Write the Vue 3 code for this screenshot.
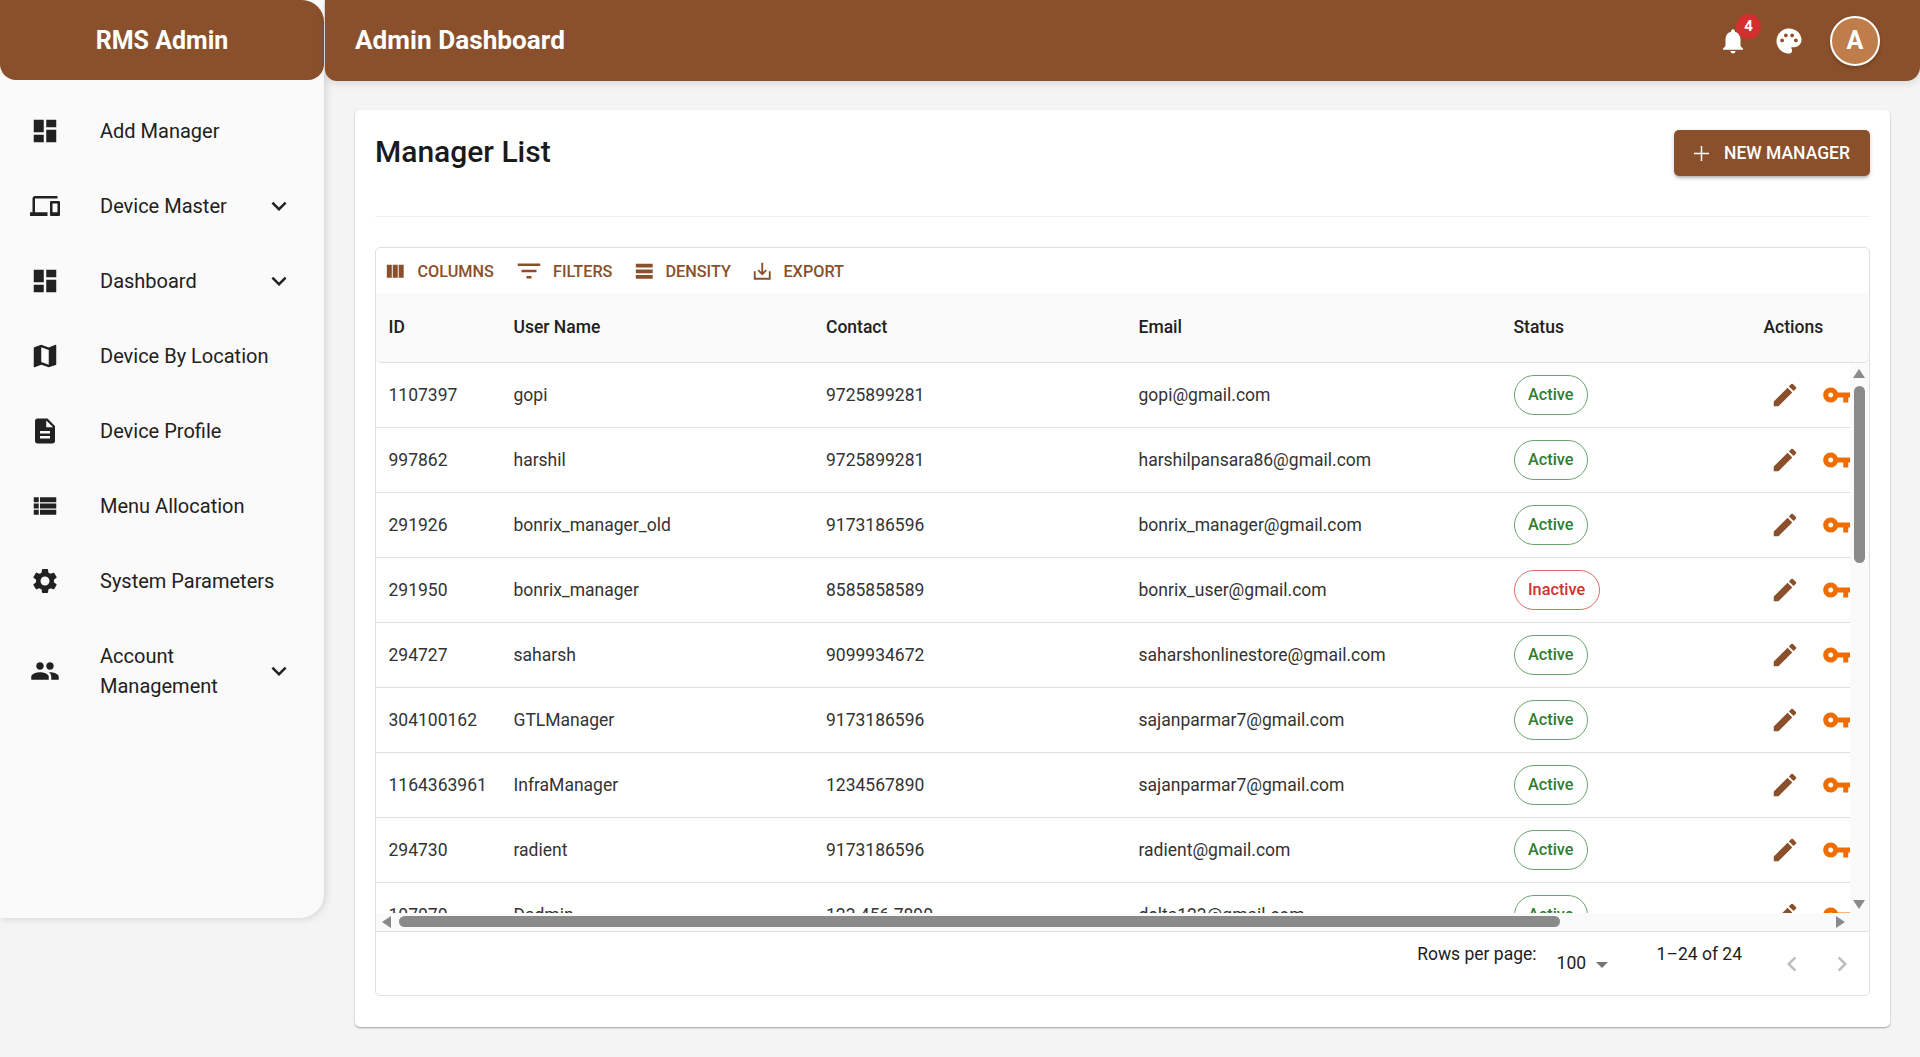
<script setup>
const icons = {
  dashboard: 'M3 13h8V3H3v10zm0 8h8v-6H3v6zm10 0h8V11h-8v10zm0-18v6h8V3h-8z',
  devices: 'M4 6h18V4H4c-1.1 0-2 .9-2 2v11H0v3h14v-3H4V6zm19 2h-6c-.55 0-1 .45-1 1v10c0 .55.45 1 1 1h6c.55 0 1-.45 1-1V9c0-.55-.45-1-1-1zm-1 9h-4v-7h4v7z',
  map: 'm20.5 3-.16.03L15 5.1 9 3 3.36 4.9c-.21.07-.36.25-.36.48V20.5c0 .28.22.5.5.5l.16-.03L9 18.9l6 2.1 5.64-1.9c.21-.07.36-.25.36-.48V3.5c0-.28-.22-.5-.5-.5zM15 19l-6-2.11V5l6 2.11V19z',
  description: 'M14 2H6c-1.1 0-1.99.9-1.99 2L4 20c0 1.1.89 2 1.99 2H18c1.1 0 2-.9 2-2V8l-6-6zm2 16H8v-2h8v2zm0-4H8v-2h8v2zm-3-5V3.5L18.5 9H13z',
  list: 'M3 14h4v-4H3v4zm0 5h4v-4H3v4zM3 9h4V5H3v4zm5 5h13v-4H8v4zm0 5h13v-4H8v4zM8 5v4h13V5H8z',
  settings: 'M19.14 12.94c.04-.3.06-.61.06-.94 0-.32-.02-.64-.07-.94l2.03-1.58c.18-.14.23-.41.12-.61l-1.92-3.32c-.12-.22-.37-.29-.59-.22l-2.39.96c-.5-.38-1.03-.7-1.62-.94l-.36-2.54c-.04-.24-.24-.41-.48-.41h-3.84c-.24 0-.43.17-.47.41l-.36 2.54c-.59.24-1.13.57-1.62.94l-2.39-.96c-.22-.08-.47 0-.59.22L2.74 8.87c-.12.21-.08.47.12.61l2.03 1.58c-.05.3-.09.63-.09.94s.02.64.07.94l-2.03 1.58c-.18.14-.23.41-.12.61l1.92 3.32c.12.22.37.29.59.22l2.39-.96c.5.38 1.03.7 1.62.94l.36 2.54c.05.24.24.41.48.41h3.84c.24 0 .44-.17.47-.41l.36-2.54c.59-.24 1.13-.56 1.62-.94l2.39.96c.22.08.47 0 .59-.22l1.92-3.32c.12-.22.07-.47-.12-.61l-2.01-1.58zM12 15.6c-1.98 0-3.6-1.62-3.6-3.6s1.62-3.6 3.6-3.6 3.6 1.62 3.6 3.6-1.62 3.6-3.6 3.6z',
  people: 'M16 11c1.66 0 2.99-1.34 2.99-3S17.66 5 16 5c-1.66 0-3 1.34-3 3s1.34 3 3 3zm-8 0c1.66 0 2.99-1.34 2.99-3S9.66 5 8 5C6.34 5 5 6.34 5 8s1.34 3 3 3zm0 2c-2.33 0-7 1.17-7 3.5V19h14v-2.5c0-2.33-4.67-3.5-7-3.5zm8 0c-.29 0-.62.02-.97.05 1.16.84 1.97 1.97 1.97 3.45V19h6v-2.5c0-2.33-4.67-3.5-7-3.5z',
  expand: 'M16.59 8.59 12 13.17 7.41 8.59 6 10l6 6 6-6z',
  bell: 'M12 22c1.1 0 2-.9 2-2h-4c0 1.1.89 2 2 2zm6-6v-5c0-3.07-1.64-5.64-4.5-6.32V4c0-.83-.67-1.5-1.5-1.5s-1.5.67-1.5 1.5v.68C7.63 5.36 6 7.92 6 11v5l-2 2v1h16v-1l-2-2z',
  palette: 'M12 2C6.49 2 2 6.49 2 12s4.49 10 10 10c1.38 0 2.5-1.12 2.5-2.5 0-.61-.23-1.2-.64-1.67-.08-.1-.13-.21-.13-.33 0-.28.22-.5.5-.5H16c3.31 0 6-2.69 6-6 0-4.96-4.49-9-10-9zm-5.5 11c-.83 0-1.5-.67-1.5-1.5S5.67 10 6.5 10s1.5.67 1.5 1.5S7.33 13 6.5 13zm3-4C8.67 9 8 8.33 8 7.5S8.67 6 9.5 6s1.5.67 1.5 1.5S10.33 9 9.5 9zm5 0c-.83 0-1.5-.67-1.5-1.5S13.67 6 14.5 6s1.5.67 1.5 1.5S15.33 9 14.5 9zm3 4c-.83 0-1.5-.67-1.5-1.5s.67-1.5 1.5-1.5 1.5.67 1.5 1.5-.67 1.5-1.5 1.5z',
  edit: 'M3 17.25V21h3.75L17.81 9.94l-3.75-3.75L3 17.25zM20.71 7.04c.39-.39.39-1.02 0-1.41l-2.34-2.34a.996.996 0 0 0-1.41 0l-1.83 1.83 3.75 3.75 1.83-1.83z',
  key: 'M12.65 10C11.83 7.67 9.61 6 7 6c-3.31 0-6 2.69-6 6s2.69 6 6 6c2.61 0 4.83-1.67 5.65-4H17v4h4v-4h2v-4H12.65zM7 14c-1.1 0-2-.9-2-2s.9-2 2-2 2 .9 2 2-.9 2-2 2z',
  columns: 'M14.67 5v14H9.33V5h5.34zm1 14H21V5h-5.33v14zm-7.34 0V5H3v14h5.33z',
  filter: 'M10 18h4v-2h-4v2zM3 6v2h18V6H3zm3 7h12v-2H6v2z',
  density: 'M21 8H3V4h18v4zm0 2H3v4h18v-4zm0 6H3v4h18v-4z',
  exportFile: 'M19 12v7H5v-7H3v9h18v-9h-2zm-6 .67 2.59-2.58L17 11.5l-5 5-5-5 1.41-1.41L11 12.67V3h2v9.67z',
  prev: 'M15.41 7.41 14 6l-6 6 6 6 1.41-1.41L10.83 12z',
  next: 'M10 6 8.59 7.41 13.17 12l-4.58 4.59L10 18l6-6z',
}

const menu = [
  { label: 'Add Manager', icon: 'dashboard' },
  { label: 'Device Master', icon: 'devices', more: true },
  { label: 'Dashboard', icon: 'dashboard', more: true },
  { label: 'Device By Location', icon: 'map' },
  { label: 'Device Profile', icon: 'description' },
  { label: 'Menu Allocation', icon: 'list' },
  { label: 'System Parameters', icon: 'settings' },
  { label: 'Account Management', icon: 'people', more: true },
]

const tools = [
  { label: 'Columns', icon: 'columns', cls: 'tool-columns' },
  { label: 'Filters', icon: 'filter', cls: 'tool-filters' },
  { label: 'Density', icon: 'density', cls: 'tool-density' },
  { label: 'Export', icon: 'exportFile', cls: 'tool-export' },
]

const rows = [
  { id: '1107397', name: 'gopi', contact: '9725899281', email: 'gopi@gmail.com', active: true },
  { id: '997862', name: 'harshil', contact: '9725899281', email: 'harshilpansara86@gmail.com', active: true },
  { id: '291926', name: 'bonrix_manager_old', contact: '9173186596', email: 'bonrix_manager@gmail.com', active: true },
  { id: '291950', name: 'bonrix_manager', contact: '8585858589', email: 'bonrix_user@gmail.com', active: false },
  { id: '294727', name: 'saharsh', contact: '9099934672', email: 'saharshonlinestore@gmail.com', active: true },
  { id: '304100162', name: 'GTLManager', contact: '9173186596', email: 'sajanparmar7@gmail.com', active: true },
  { id: '1164363961', name: 'InfraManager', contact: '1234567890', email: 'sajanparmar7@gmail.com', active: true },
  { id: '294730', name: 'radient', contact: '9173186596', email: 'radient@gmail.com', active: true },
  { id: '107070', name: 'Dadmin', contact: '123 456 7890', email: 'delta123@gmail.com', active: true },
]
</script>

<template>
  <div class="page">
    <aside class="sidebar">
      <div class="logo">RMS Admin</div>
      <nav class="menu">
        <div v-for="item in menu" :key="item.label" class="menu-item">
          <svg class="menu-icon" viewBox="0 0 24 24"><path :d="icons[item.icon]" /></svg>
          <span class="menu-label">{{ item.label }}</span>
          <svg v-if="item.more" class="menu-more" viewBox="0 0 24 24"><path :d="icons.expand" /></svg>
        </div>
      </nav>
    </aside>

    <div class="main">
      <header class="appbar">
        <h1 class="appbar-title">Admin Dashboard</h1>
        <div class="appbar-actions">
          <div class="bell">
            <svg class="bar-icon" viewBox="0 0 24 24"><path :d="icons.bell" /></svg>
            <span class="badge">4</span>
          </div>
          <svg class="bar-icon" viewBox="0 0 24 24"><path :d="icons.palette" /></svg>
          <div class="avatar">A</div>
        </div>
      </header>

      <section class="content">
        <div class="card">
          <div class="card-head">
            <h2 class="card-title">Manager List</h2>
            <button class="new-btn">
              <svg class="plus" viewBox="0 0 15 15"><path d="M7.5 0v15M0 7.5h15" /></svg>
              New Manager
            </button>
          </div>

          <div class="grid">
            <div class="toolbar">
              <div v-for="t in tools" :key="t.label" class="tool" :class="t.cls">
                <svg class="tool-icon" viewBox="0 0 24 24"><path :d="icons[t.icon]" /></svg>
                <span>{{ t.label }}</span>
              </div>
            </div>

            <div class="grid-head">
              <div class="cell c-id">ID</div>
              <div class="cell c-name">User Name</div>
              <div class="cell c-contact">Contact</div>
              <div class="cell c-email">Email</div>
              <div class="cell c-status">Status</div>
              <div class="cell c-actions">Actions</div>
            </div>

            <div class="grid-body">
              <div class="viewport">
                <div v-for="r in rows" :key="r.id" class="row">
                  <div class="cell c-id">{{ r.id }}</div>
                  <div class="cell c-name">{{ r.name }}</div>
                  <div class="cell c-contact">{{ r.contact }}</div>
                  <div class="cell c-email">{{ r.email }}</div>
                  <div class="cell c-status">
                    <span class="chip" :class="r.active ? 'chip-on' : 'chip-off'">{{ r.active ? 'Active' : 'Inactive' }}</span>
                  </div>
                  <div class="cell c-actions">
                    <span class="act"><svg class="act-icon edit" viewBox="0 0 24 24"><path :d="icons.edit" /></svg></span>
                    <span class="act"><svg class="act-icon key" viewBox="0 0 24 24"><path :d="icons.key" /></svg></span>
                  </div>
                </div>
              </div>
              <div class="vbar">
                <span class="arrow arrow-up"></span>
                <span class="vthumb"></span>
                <span class="arrow arrow-down"></span>
              </div>
            </div>

            <div class="hbar">
              <span class="arrow arrow-left"></span>
              <span class="hthumb"></span>
              <span class="arrow arrow-right"></span>
            </div>

            <div class="grid-foot">
              <span class="foot-label">Rows per page:</span>
              <span class="foot-select">100<span class="select-caret"></span></span>
              <span class="foot-range">1–24 of 24</span>
              <div class="foot-pager">
                <svg class="pager-icon" viewBox="0 0 24 24"><path :d="icons.prev" /></svg>
                <svg class="pager-icon" viewBox="0 0 24 24"><path :d="icons.next" /></svg>
              </div>
            </div>
          </div>
        </div>
      </section>
    </div>
  </div>
</template>

<style>
html, body {
  margin: 0;
  background: #f4f4f4;
}
</style>

<style scoped>
.page {
  display: flex;
  align-items: flex-start;
  width: 1920px;
  height: 1057px;
  overflow: hidden;
  background: #f4f4f4;
  font-family: Roboto, "Liberation Sans", sans-serif;
  color: #212121;
}

/* sidebar */
.sidebar {
  width: 324px;
  height: 918px;
  flex: none;
  background: #fafafa;
  border-bottom-right-radius: 24px;
  box-shadow: 1px 0 8px rgba(0, 0, 0, 0.16);
}
.logo {
  height: 80px;
  display: flex;
  align-items: center;
  justify-content: center;
  background: #8a502b;
  color: #fff;
  font-size: 25px;
  font-weight: 700;
  border-radius: 0 22px 16px 16px;
}
.menu {
  padding-top: 13px;
}
.menu-item {
  display: flex;
  align-items: center;
  padding: 22.5px 30px;
}
.menu-icon {
  width: 30px;
  height: 30px;
  flex: none;
  margin-right: 40px;
  fill: #212121;
}
.menu-label {
  flex: 1;
  font-size: 20px;
  line-height: 30px;
}
.menu-more {
  width: 30px;
  height: 30px;
  flex: none;
  fill: #212121;
}

/* top bar */
.main {
  flex: 1;
  min-width: 0;
  margin-left: 1px;
}
.appbar {
  height: 81px;
  display: flex;
  align-items: center;
  justify-content: space-between;
  padding: 0 40px 0 30px;
  background: #8a502b;
  color: #fff;
  border-radius: 0 0 14px 12px;
  box-shadow: 0 2px 8px rgba(0, 0, 0, 0.12);
}
.appbar-title {
  margin: 0 0 2px;
  font-size: 26.2px;
  font-weight: 700;
}
.appbar-actions {
  display: flex;
  align-items: center;
  gap: 26px;
}
.bar-icon {
  display: block;
  width: 30px;
  height: 30px;
  fill: #fff;
}
.bell {
  position: relative;
}
.badge {
  position: absolute;
  top: -12px;
  left: 18px;
  width: 25px;
  height: 25px;
  border-radius: 50%;
  background: #d32f2f;
  color: #fff;
  font-size: 15px;
  font-weight: 700;
  line-height: 25px;
  text-align: center;
}
.avatar {
  width: 46px;
  height: 46px;
  border: 2px solid #fff;
  border-radius: 50%;
  background: #c07d4c;
  color: #fff;
  font-size: 25px;
  font-weight: 700;
  line-height: 46px;
  text-align: center;
  box-shadow: 0 2px 4px rgba(0, 0, 0, 0.2);
}

/* card */
.content {
  padding: 29px 30px 0;
}
.card {
  height: 917px;
  box-sizing: border-box;
  padding: 20px;
  background: #fff;
  border-radius: 5px;
  box-shadow: 0 1px 2px rgba(0, 0, 0, 0.35);
}
.card-head {
  display: flex;
  align-items: center;
  justify-content: space-between;
  padding-bottom: 40px;
  border-bottom: 1px solid #f0f0f0;
}
.card-title {
  margin: 0 0 2.5px;
  font-size: 30px;
  font-weight: 500;
  color: #1a1a1a;
}
.new-btn {
  display: flex;
  align-items: center;
  width: 196px;
  height: 46px;
  box-sizing: border-box;
  padding: 0 0 0 20px;
  border: 0;
  border-radius: 5px;
  background: #8a502b;
  color: #fff;
  font-family: inherit;
  font-size: 17.5px;
  font-weight: 500;
  text-transform: uppercase;
  box-shadow: 0 3px 3px -2px rgba(0, 0, 0, 0.2), 0 2px 4px rgba(0, 0, 0, 0.2);
}
.plus {
  width: 15px;
  height: 15px;
  margin-right: 15px;
  fill: none;
  stroke: #fff;
  stroke-width: 1.5;
}

/* data grid */
.grid {
  margin-top: 30px;
  height: 749px;
  box-sizing: border-box;
  border: 1.5px solid #e0e0e0;
  border-radius: 5px;
  overflow: hidden;
}
.toolbar {
  display: flex;
  height: 44.5px;
  box-sizing: border-box;
  padding-top: 2px;
  align-items: center;
  color: #8a502b;
  font-size: 16.25px;
  font-weight: 500;
  text-transform: uppercase;
}
.tool {
  display: flex;
  align-items: center;
}
.tool-icon {
  width: 22.5px;
  height: 22.5px;
  fill: #8a502b;
  margin-right: 10px;
}
.tool-columns { margin-left: 8px; }
.tool-columns .tool-icon { margin-right: 11px; }
.tool-filters { margin-left: 20px; }
.tool-filters .tool-icon { width: 30px; height: 30px; margin-right: 9px; }
.tool-density { margin-left: 20.5px; }
.tool-density .tool-icon { margin-right: 10px; }
.tool-export { margin-left: 20px; }

.grid-head {
  display: flex;
  height: 70.5px;
  box-sizing: border-box;
  align-items: center;
  background: #fafafa;
  border-bottom: 1.5px solid #e0e0e0;
  border-radius: 0 0 5px 5px;
  font-size: 17.5px;
  font-weight: 500;
}
.cell {
  flex: none;
  box-sizing: border-box;
  padding: 0 12.5px;
  white-space: nowrap;
}
.c-id { width: 125px; }
.c-name { width: 312.5px; }
.c-contact { width: 312.5px; }
.c-email { width: 375px; }
.c-status { width: 250px; }
.c-actions { width: 250px; display: flex; align-items: center; gap: 10px; }

.grid-body {
  display: flex;
  height: 550px;
}
.viewport {
  flex: 1;
  min-width: 0;
  overflow: hidden;
}
.row {
  display: flex;
  align-items: center;
  height: 65px;
  box-sizing: border-box;
  border-bottom: 1.5px solid #e0e0e0;
  font-size: 17.5px;
  color: #333;
}
.chip {
  display: inline-block;
  height: 40px;
  box-sizing: border-box;
  padding: 0 13.5px;
  border-radius: 20px;
  border: 1.25px solid;
  font-size: 16.25px;
  font-weight: 500;
  line-height: 37.5px;
}
.chip-on {
  color: #2e7d32;
  border-color: rgba(46, 125, 50, 0.7);
}
.chip-off {
  color: #d32f2f;
  border-color: rgba(211, 47, 47, 0.7);
}
.act {
  flex: none;
  padding: 6.25px;
  display: flex;
}
.act-icon {
  width: 30px;
  height: 30px;
}
.act-icon.edit { fill: #8a502b; }
.act-icon.key { fill: #ef6c00; }

/* scrollbars */
.vbar {
  position: relative;
  width: 19px;
  flex: none;
  background: #fafafa;
}
.vthumb {
  position: absolute;
  top: 23px;
  left: 4px;
  width: 11px;
  height: 177px;
  border-radius: 6px;
  background: #8a8a8a;
}
.hbar {
  display: flex;
  align-items: center;
  height: 17.5px;
  padding: 0 24px 0 6px;
  background: #fafafa;
  border-bottom: 1.5px solid #e0e0e0;
}
.hthumb {
  width: 1161px;
  height: 11px;
  margin-left: 8px;
  border-radius: 6px;
  background: #8a8a8a;
}
.arrow {
  display: block;
  width: 0;
  height: 0;
  border-style: solid;
  border-color: transparent;
}
.vbar .arrow {
  position: absolute;
  left: 3px;
}
.arrow-up {
  top: 6px;
  border-width: 0 6.5px 9px;
  border-bottom-color: #8a8a8a !important;
}
.arrow-down {
  bottom: 4px;
  border-width: 9px 6.5px 0;
  border-top-color: #8a8a8a !important;
}
.arrow-left {
  border-width: 6.5px 9px 6.5px 0;
  border-right-color: #8a8a8a;
}
.arrow-right {
  margin-left: auto;
  border-width: 6.5px 0 6.5px 9px;
  border-left-color: #8a8a8a;
}

.grid-foot {
  display: flex;
  align-items: flex-start;
  justify-content: flex-end;
  height: 64px;
  padding-right: 12px;
  font-size: 17.5px;
  color: #212121;
}
.foot-label {
  margin-top: 12.5px;
}
.foot-select {
  display: flex;
  align-items: center;
  margin: 21px 0 0 20px;
}
.select-caret {
  width: 0;
  height: 0;
  margin: 4px 0 0 9.5px;
  border-style: solid;
  border-width: 6px 6.5px 0;
  border-color: #757575 transparent transparent;
}
.foot-range {
  margin: 12.5px 0 0 49px;
}
.foot-pager {
  display: flex;
  gap: 20px;
  margin: 17.5px 0 0 35px;
}
.pager-icon {
  width: 30px;
  height: 30px;
  fill: #bdbdbd;
}
</style>
